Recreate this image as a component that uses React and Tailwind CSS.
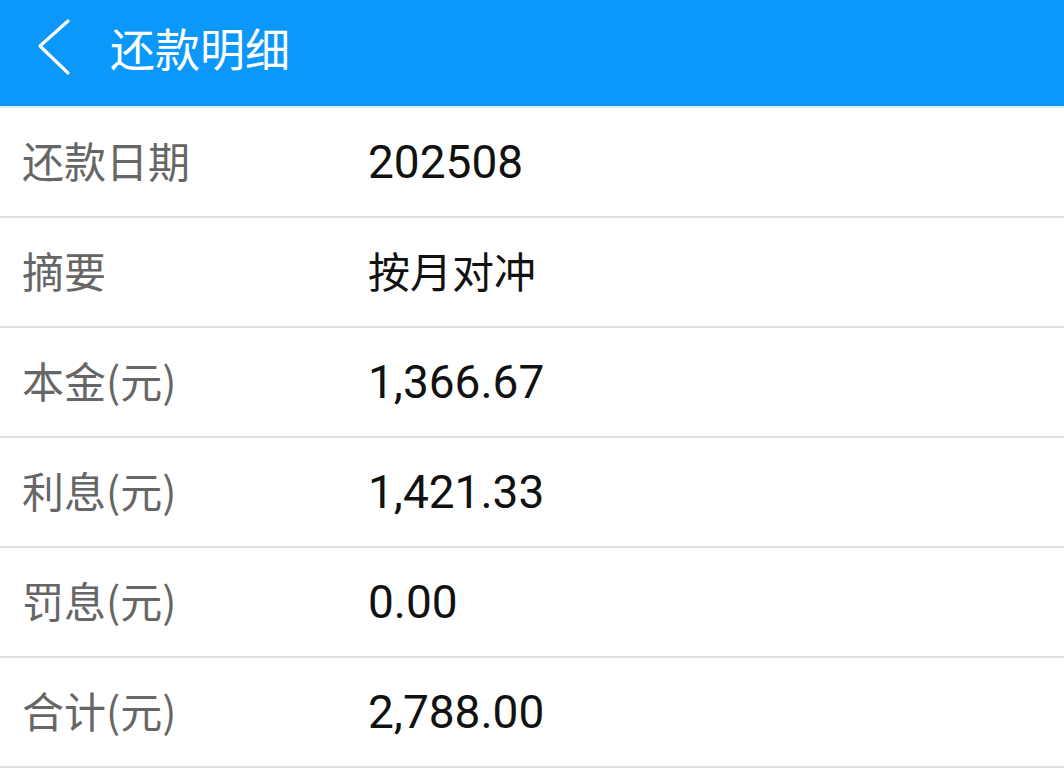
import React from "react";

const rows = [
  ["还款日期", "202508", false],
  ["摘要", "按月对冲", true],
  ["本金(元)", "1,366.67", false],
  ["利息(元)", "1,421.33", false],
  ["罚息(元)", "0.00", false],
  ["合计(元)", "2,788.00", false],
];

export default function App() {
  return (
    <div className="w-[1064px] h-[768px] bg-white overflow-hidden font-['Roboto','Noto_Sans_CJK_SC',sans-serif]">
      <div className="h-[106px] bg-[#0b98fa] flex items-center pb-[12px]">
        <svg className="ml-[36px]" width="36" height="58" viewBox="0 0 36 58">
          <path d="M32 3 L4 28 L32 55" fill="none" stroke="white" strokeWidth="3.2" strokeLinecap="round" strokeLinejoin="round" />
        </svg>
        <span className="ml-[38px] text-white text-[45px] leading-none font-['Noto_Sans_CJK_SC',sans-serif]">还款明细</span>
      </div>
      <div className="h-[2px] bg-[#d6eefc]" />
      {rows.map(([k, v, cjk]) => (
        <div key={k} className="h-[110px] border-b-2 border-[#e0e0e0] flex items-center">
          <div className="w-[368px] pl-[22px] pb-[5px] text-[42px] text-[#666666] leading-none font-['Noto_Sans_CJK_SC',sans-serif]">{k}</div>
          {cjk ? (
            <div className="pb-[5px] text-[42px] text-[#111111] leading-none font-['Noto_Sans_CJK_SC',sans-serif]">{v}</div>
          ) : (
            <div className="text-[46px] text-[#111111] leading-none font-['Roboto','Noto_Sans_CJK_SC',sans-serif]">{v}</div>
          )}
        </div>
      ))}
    </div>
  );
}
